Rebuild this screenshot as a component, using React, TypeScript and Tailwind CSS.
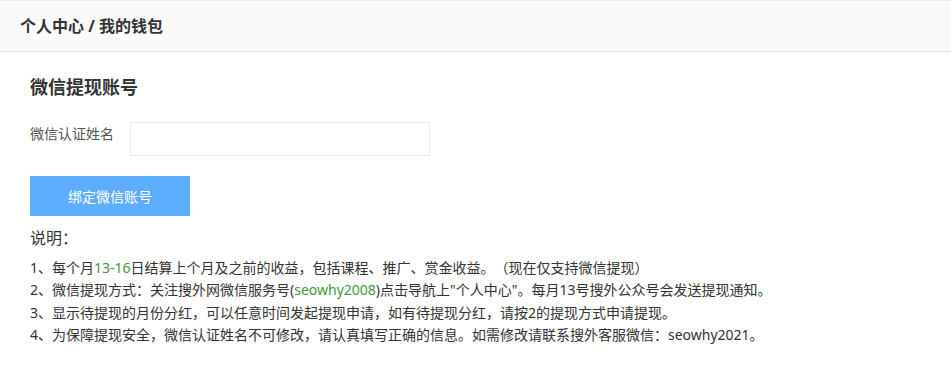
import React from "react";

const font = { fontFamily: '"Microsoft YaHei", "Noto Sans", "Noto Sans CJK SC", sans-serif' };

export default function App() {
  return (
    <div className="w-[951px] h-[370px] bg-white text-[#333] [text-spacing-trim:space-all]" style={font}>
      <div className="h-[52px] bg-[#fafafa] border-t border-b border-t-[#ececec] border-b-[#e3e3e3] flex items-center px-[20px]">
        <span className="text-[16px] font-bold text-[#333] leading-[22px]">个人中心 / 我的钱包</span>
      </div>
      <div className="px-[30px]">
        <h2 className="mt-[23px] text-[18px] font-bold leading-[24px] text-[#333]">微信提现账号</h2>
        <div className="mt-[23px] flex items-start">
          <label className="mt-[2px] w-[100px] text-[14px] leading-[20px] text-[#555]">微信认证姓名</label>
          <input className="w-[300px] h-[34px] border border-[#ebebeb] outline-none px-2 text-[14px]" />
        </div>
        <button className="mt-[20px] w-[160px] h-[40px] bg-[#5cadfd] text-white text-[14px] flex items-center justify-center">
          绑定微信账号
        </button>
        <div className="mt-[11px] text-[16px] leading-[22px] text-[#333]">说明：</div>
        <div className="mt-[8px] text-[14px] leading-[22.4px] text-[#333]">
          <p>
            1、每个月<span className="text-[#3e9a48]">13-16</span>日结算上个月及之前的收益，包括课程、推广、赏金收益。（现在仅支持微信提现）
          </p>
          <p>
            2、微信提现方式：关注搜外网微信服务号(<span className="text-[#3e9a48]">seowhy2008</span>)点击导航上"个人中心"。每月13号搜外公众号会发送提现通知。
          </p>
          <p>3、显示待提现的月份分红，可以任意时间发起提现申请，如有待提现分红，请按2的提现方式申请提现。</p>
          <p>4、为保障提现安全，微信认证姓名不可修改，请认真填写正确的信息。如需修改请联系搜外客服微信：seowhy2021。</p>
        </div>
      </div>
    </div>
  );
}
